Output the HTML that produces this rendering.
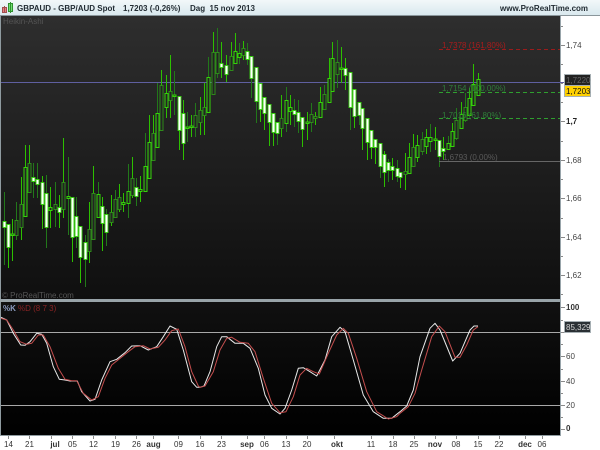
<!DOCTYPE html>
<html><head><meta charset="utf-8"><style>
html,body{margin:0;padding:0;background:#fff;width:600px;height:450px;overflow:hidden}
svg{display:block;font-family:"Liberation Sans",sans-serif;font-size:8px;filter:blur(.3px)}
</style></head><body>
<svg width="600" height="450" viewBox="0 0 600 450" xmlns="http://www.w3.org/2000/svg">
<defs>
<linearGradient id="h" x1="0" y1="0" x2="0" y2="1"><stop offset="0" stop-color="#f2f7f9"/><stop offset="1" stop-color="#d9e8ee"/></linearGradient>
<linearGradient id="c" x1="0" y1="0" x2="0" y2="1"><stop offset="0" stop-color="#2e2e2e"/><stop offset="1" stop-color="#0f0f0f"/></linearGradient>
<linearGradient id="i" x1="0" y1="0" x2="0" y2="1"><stop offset="0" stop-color="#101010"/><stop offset="1" stop-color="#000"/></linearGradient>
</defs>
<rect width="600" height="450" fill="#fff"/>
<rect width="600" height="15" fill="url(#h)"/>
<rect y="15" width="600" height="1" fill="#8a969b"/>
<rect y="16" width="1" height="420" fill="#8f9ba0"/>
<rect x="1" y="16" width="559" height="283" fill="url(#c)"/>
<rect x="0" y="299" width="561" height="3" fill="#98a3a8"/>
<rect x="1" y="302" width="559" height="133" fill="url(#i)"/>
<rect x="0" y="435" width="561" height="1" fill="#8f9ba0"/>
<rect x="560" y="16" width="1" height="420" fill="#98a4aa"/>

<rect x="2.5" y="7.5" width="4" height="5" fill="#e88080" stroke="#a05050"/>
<path d="M4.5 6V13" stroke="#a05050"/>
<rect x="8.5" y="3.5" width="4" height="8" fill="#70e070" stroke="#309030"/>
<path d="M10.5 2V13" stroke="#309030"/>
<g fill="#222c33" font-weight="bold">
<text x="17" y="11">GBPAUD - GBP/AUD Spot</text>
<text x="123" y="11">1,7203 (-0,26%)</text>
<text x="190" y="11">Dag&#160;&#160;15 nov 2013</text>
<text x="500" y="11">www.ProRealTime.com</text>
</g>
<text x="3" y="24" fill="#555">Heikin-Ashi</text>
<text x="2" y="298" fill="#555">© ProRealTime.com</text>

<path d="M1 82.5H564" stroke="#5f5fa0"/>

<!-- dark wicks -->
<path fill="none" stroke="#22781a" d="M4.5 192V265M16.5 202V240M33.5 163V198M37.5 163V198M46.5 175V248M55.5 182V227M68.5 157V235M76.5 197V248M85.5 235V287M98.5 182V217M106.5 209V246M115.5 190V218M128.5 164V218M136.5 178V206M145.5 133V187M157.5 83V147M174.5 71V115M187.5 112V142M195.5 103V137M208.5 57V112M217.5 28V78M239.5 43V64M247.5 43V65M251.5 56V98M256.5 67V123M277.5 122V145M286.5 87V132M294.5 99V127M298.5 100V133M311.5 103V132M324.5 85V110M337.5 40V88M350.5 72V130M359.5 102V125M380.5 143V178M388.5 159V182M397.5 160V182M422.5 132V155M430.5 124V152M439.5 140V167M448.5 136V150M456.5 108V140M465.5 93V122"/>
<!-- bright wicks -->
<path fill="none" stroke="#2cc000" d="M8.5 224V268M12.5 219V261M21.5 177V240M25.5 145V216M29.5 145V192M42.5 176V229M50.5 187V228M59.5 195V228M63.5 138V218M72.5 197V262M80.5 226V283M89.5 202V263M93.5 166V239M102.5 197V251M111.5 195V226M119.5 184V212M123.5 193V212M132.5 157V198M140.5 176V202M149.5 115V178M153.5 115V160M161.5 70V131M166.5 75V118M170.5 55V118M179.5 96V150M183.5 100V160M191.5 115V137M200.5 97V135M204.5 83V135M213.5 32V94M221.5 42V78M226.5 55V82M231.5 42V70M235.5 33V64M243.5 41V60M260.5 83V122M264.5 97V130M269.5 104V146M273.5 113V146M281.5 95V137M290.5 95V125M302.5 117V147M307.5 112V140M315.5 112V125M320.5 87V117M329.5 58V102M332.5 42V91M341.5 47V83M345.5 58V90M354.5 89V128M362.5 108V150M367.5 118V160M371.5 130V159M375.5 139V164M384.5 151V187M392.5 158V180M400.5 172V188M405.5 153V190M409.5 143V173M413.5 134V166M417.5 135V162M426.5 129V154M435.5 127V150M443.5 137V160M452.5 123V146M461.5 102V128M469.5 88V115M473.5 64V105M478.5 73V95"/>
<!-- dark hollow bodies -->
<path fill="#232323" stroke="#2e8a1a" d="M15 220.5h3V235.5h-3zM20 204.5h3V227.5h-3zM28 163.5h3V192.5h-3zM54 204.5h3V209.5h-3zM62 182.5h3V209.5h-3zM88 229.5h3V251.5h-3zM92 193.5h3V239.5h-3zM110 212.5h3V222.5h-3zM114 199.5h3V217.5h-3zM118 197.5h3V209.5h-3zM131 178.5h3V195.5h-3zM152 133.5h3V160.5h-3zM160 85.5h3V130.5h-3zM169 91.5h3V100.5h-3zM194 115.5h3V127.5h-3zM199 110.5h3V122.5h-3zM203 107.5h3V115.5h-3zM212 52.5h3V94.5h-3zM216 52.5h3V73.5h-3zM230 56.5h3V70.5h-3zM242 48.5h3V55.5h-3zM280 118.5h3V128.5h-3zM310 114.5h3V122.5h-3zM314 116.5h3V118.5h-3zM323 94.5h3V109.5h-3zM336 62.5h3V74.5h-3zM404 171.5h3V174.5h-3zM412 147.5h3V166.5h-3zM421 139.5h3V151.5h-3zM455 120.5h3V138.5h-3zM464 107.5h3V120.5h-3z"/>
<!-- bright hollow bodies -->
<path fill="#232323" stroke="#34d408" d="M11 234h3V235.5h-3zM24 167.5h3V216.5h-3zM49 207.5h3V210.5h-3zM67 196.5h3V198.5h-3zM97 194.5h3V217.5h-3zM122 202.5h3V204.5h-3zM127 191.5h3V203.5h-3zM139 189.5h3V191.5h-3zM144 166.5h3V191.5h-3zM148 142.5h3V178.5h-3zM156 113.5h3V147.5h-3zM165 93.5h3V107.5h-3zM173 95h3V96.5h-3zM186 127h3V128.5h-3zM190 126h3V127.5h-3zM207 77.5h3V112.5h-3zM234 51.5h3V63.5h-3zM238 53.5h3V57.5h-3zM285 100.5h3V123.5h-3zM289 107.5h3V111.5h-3zM306 122h3V123.5h-3zM319 102.5h3V117.5h-3zM328 78.5h3V102.5h-3zM331 58.5h3V91.5h-3zM340 68h3V69.5h-3zM408 157.5h3V173.5h-3zM416 145.5h3V157.5h-3zM425 137.5h3V146.5h-3zM429 137.5h3V141.5h-3zM434 139h3V140.5h-3zM447 143.5h3V149.5h-3zM451 131.5h3V146.5h-3zM460 114.5h3V128.5h-3zM468 98.5h3V115.5h-3zM472 84.5h3V105.5h-3zM477 79.5h3V95.5h-3z"/>
<!-- white bodies -->
<path fill="#fff" stroke="#38d010" stroke-width=".9" d="M3 221.5h3V227.5h-3zM7 224.5h3V247.5h-3zM32 177.5h3V181.5h-3zM36 179.5h3V184.5h-3zM41 182.5h3V204.5h-3zM45 193.5h3V227.5h-3zM58 207.5h3V212.5h-3zM71 197.5h3V237.5h-3zM75 216.5h3V236.5h-3zM79 226.5h3V257.5h-3zM84 242.5h3V259.5h-3zM101 206.5h3V223.5h-3zM105 214.5h3V232.5h-3zM135 187.5h3V196.5h-3zM178 96.5h3V130.5h-3zM182 113.5h3V143.5h-3zM220 63.5h3V67.5h-3zM225 65.5h3V74.5h-3zM246 51.5h3V59.5h-3zM250 56.5h3V78.5h-3zM255 67.5h3V101.5h-3zM259 83.5h3V109.5h-3zM263 97.5h3V113.5h-3zM268 104.5h3V122.5h-3zM272 113.5h3V132.5h-3zM276 122.5h3V133.5h-3zM293 110.5h3V114.5h-3zM297 112.5h3V121.5h-3zM301 117.5h3V129.5h-3zM344 68.5h3V75.5h-3zM349 72.5h3V107.5h-3zM353 89.5h3V116.5h-3zM358 102.5h3V115.5h-3zM361 108.5h3V128.5h-3zM366 118.5h3V142.5h-3zM370 130.5h3V147.5h-3zM374 139.5h3V147.5h-3zM379 143.5h3V166.5h-3zM383 154.5h3V172.5h-3zM387 162.5h3V170.5h-3zM391 166.5h3V170.5h-3zM396 168.5h3V176.5h-3zM399 172.5h3V177.5h-3zM438 140.5h3V156.5h-3zM442 148.5h3V151.5h-3z"/>

<!-- fibonacci -->
<path d="M439 49.5H560" stroke="#9a1c1c" stroke-dasharray="4 3"/>
<path d="M439 92.5H560" stroke="#2f9f2f" stroke-dasharray="4 3"/>
<path d="M439 118.5H560" stroke="#2f9f2f" stroke-dasharray="4 3"/>
<path d="M439 161.5H560" stroke="#666"/>
<text x="442" y="48" fill="#a81c1c">1,7378 (161,80%)</text>
<text x="442" y="91" fill="#2f7f3a">1,7154 (100,00%)</text>
<text x="442" y="118" fill="#2f7f3a">1,7016 (61,80%)</text>
<text x="443" y="160" fill="#5a5a5a">1,6793 (0,00%)</text>

<!-- price axis -->
<path stroke="#8a8a8a" d="M561 45.5h4M561 121.5h4M561 160.5h4M561 198.5h4M561 237.5h4M561 275.5h4M561 26.5h2M561 64.5h2M561 83.5h2M561 102.5h2M561 141.5h2M561 179.5h2M561 218.5h2M561 256.5h2M561 294.5h2"/>
<g fill="#444">
<text x="566" y="48">1,74</text>
<text x="566" y="124" font-weight="bold" fill="#222">1,7</text>
<text x="566" y="163">1,68</text>
<text x="566" y="201">1,66</text>
<text x="566" y="240">1,64</text>
<text x="566" y="278">1,62</text>
</g>
<rect x="564.5" y="74.5" width="26" height="22" fill="#ffd000" stroke="#a6afb3"/>
<rect x="565" y="75" width="25" height="10" fill="#222"/>
<rect x="564" y="85" width="27" height="1" fill="#a6afb3"/>
<text x="566" y="83" fill="#666">1,7220</text>
<text x="566" y="94" fill="#111">1,7203</text>

<!-- indicator -->
<path d="M1 332.5H560M1 405.5H560" stroke="#a8a8a8"/>
<polyline fill="none" stroke="#e8e8e8" stroke-linejoin="round" points="1,317.3 6.7,320 13.3,333.3 20.7,345 25,345.3 30,341.7 36.7,333.3 41.7,334.3 46.7,343.3 53.3,366.7 59.3,379.3 65,380 70,381 77.3,381 81.7,391.7 90,401 95,399.3 101.7,380 110,361.7 116.7,359.3 125,352.7 131.7,346 140,345.7 148.3,350 156.7,346.7 163.3,336.7 170,326 176.7,329.3 183.3,350 191.7,381.7 196.7,387.3 200,387.3 204,386 210,371.7 216.7,346.7 221.7,336.7 226.7,336.7 235,343.3 243.3,343.3 250,348.3 258.3,368.3 265,395 271.7,408.3 280,414 285,408.3 291.7,390 298.3,368.3 303.3,367.7 310,371.7 316.7,376 325,360 331.7,336.7 340,327.3 345,331.7 353.3,360 363.3,395 373.3,411.7 383.3,418.3 391.7,418.3 400,411.7 406.7,406 413.3,390 420,356.7 430,328.3 435,323.3 440,330 452.7,361 460,353.3 470,330 474,326 478,326"/>
<polyline fill="none" stroke="#c44e4e" stroke-linejoin="round" points="1,318.3 6.7,320 13.3,330 20,341.7 26.7,344.3 31.7,343.3 38.3,335 43.3,335 50,346.7 58.3,368.3 65,379.3 71.7,380.7 76.7,380.7 83.3,393.3 91.7,400 98.3,396.7 105,378.3 111.7,365 120,358.3 128.3,351.7 135,346.7 143.3,345.7 150,349 158.3,347.3 165,340 171.7,330.7 178.3,329 185,346.7 191.7,371.7 198.3,386 200,387.3 205,386 213.3,371.7 220,350 226.7,338.3 231.7,337.3 240,342.3 248.3,343.3 255,351.7 263.3,378.3 271.7,403.3 280,412.7 286,411.7 293.3,396.7 300,375 306.7,368.3 313.3,371.7 319.3,374 328.3,353.3 336.7,335 343.3,328.3 348.3,333.3 356.7,358.3 366.7,391.7 376.7,411.7 388.3,419 396.7,416.7 400,413.3 408.3,406.7 415,393.3 421.7,370 431.7,336.7 439.3,326 445,331.7 455,357.3 460,357.3 466.7,345 473.3,330 478,326.7"/>
<text x="3" y="311" fill="#8c9cc0" font-weight="bold">%K</text>
<text x="18" y="311" fill="#8a2424">%D (8 7 3)</text>

<!-- indicator axis -->
<path stroke="#8a8a8a" d="M561 307.5h4M561 332.5h4M561 356.5h4M561 381.5h4M561 405.5h4M561 429.5h4M561 320.5h2M561 344.5h2M561 369.5h2M561 393.5h2M561 417.5h2"/>
<g fill="#444">
<text x="566" y="310" font-weight="bold" fill="#333">100</text>
<text x="566" y="359">60</text>
<text x="566" y="384">40</text>
<text x="566" y="408">20</text>
<text x="566" y="431" font-weight="bold" fill="#333">0</text>
</g>
<rect x="564.5" y="321.5" width="26" height="11" fill="#2a3034" stroke="#a6afb3"/>
<text x="566" y="330" fill="#d8d8d8">85,329</text>

<!-- time axis -->
<path stroke="#8a8a8a" d="M8.5 436v3M29.5 436v3M51.5 436v3M72.5 436v3M93.5 436v3M115.5 436v3M136.5 436v3M153.5 436v3M178.5 436v3M200.5 436v3M221.5 436v3M247.5 436v3M264.5 436v3M286.5 436v3M307.5 436v3M334.5 436v3M371.5 436v3M393.5 436v3M414.5 436v3M435.5 436v3M456.5 436v3M478.5 436v3M499.5 436v3M525.5 436v3M542.5 436v3"/>
<g fill="#333" text-anchor="middle">
<text x="8.5" y="447">14</text>
<text x="29.5" y="447">21</text>
<text x="55" y="447" font-weight="bold">jul</text>
<text x="72.5" y="447">05</text>
<text x="93.5" y="447">12</text>
<text x="115.5" y="447">19</text>
<text x="136.5" y="447">26</text>
<text x="153.5" y="447" font-weight="bold">aug</text>
<text x="178.5" y="447">09</text>
<text x="200" y="447">16</text>
<text x="221.5" y="447">23</text>
<text x="247" y="447" font-weight="bold">sep</text>
<text x="264.5" y="447">06</text>
<text x="286" y="447">13</text>
<text x="307" y="447">20</text>
<text x="337" y="447" font-weight="bold">okt</text>
<text x="371" y="447">11</text>
<text x="393" y="447">18</text>
<text x="414" y="447">25</text>
<text x="435" y="447" font-weight="bold">nov</text>
<text x="456" y="447">08</text>
<text x="478" y="447">15</text>
<text x="499" y="447">22</text>
<text x="525" y="447" font-weight="bold">dec</text>
<text x="542" y="447">06</text>
</g>
</svg>
</body></html>
